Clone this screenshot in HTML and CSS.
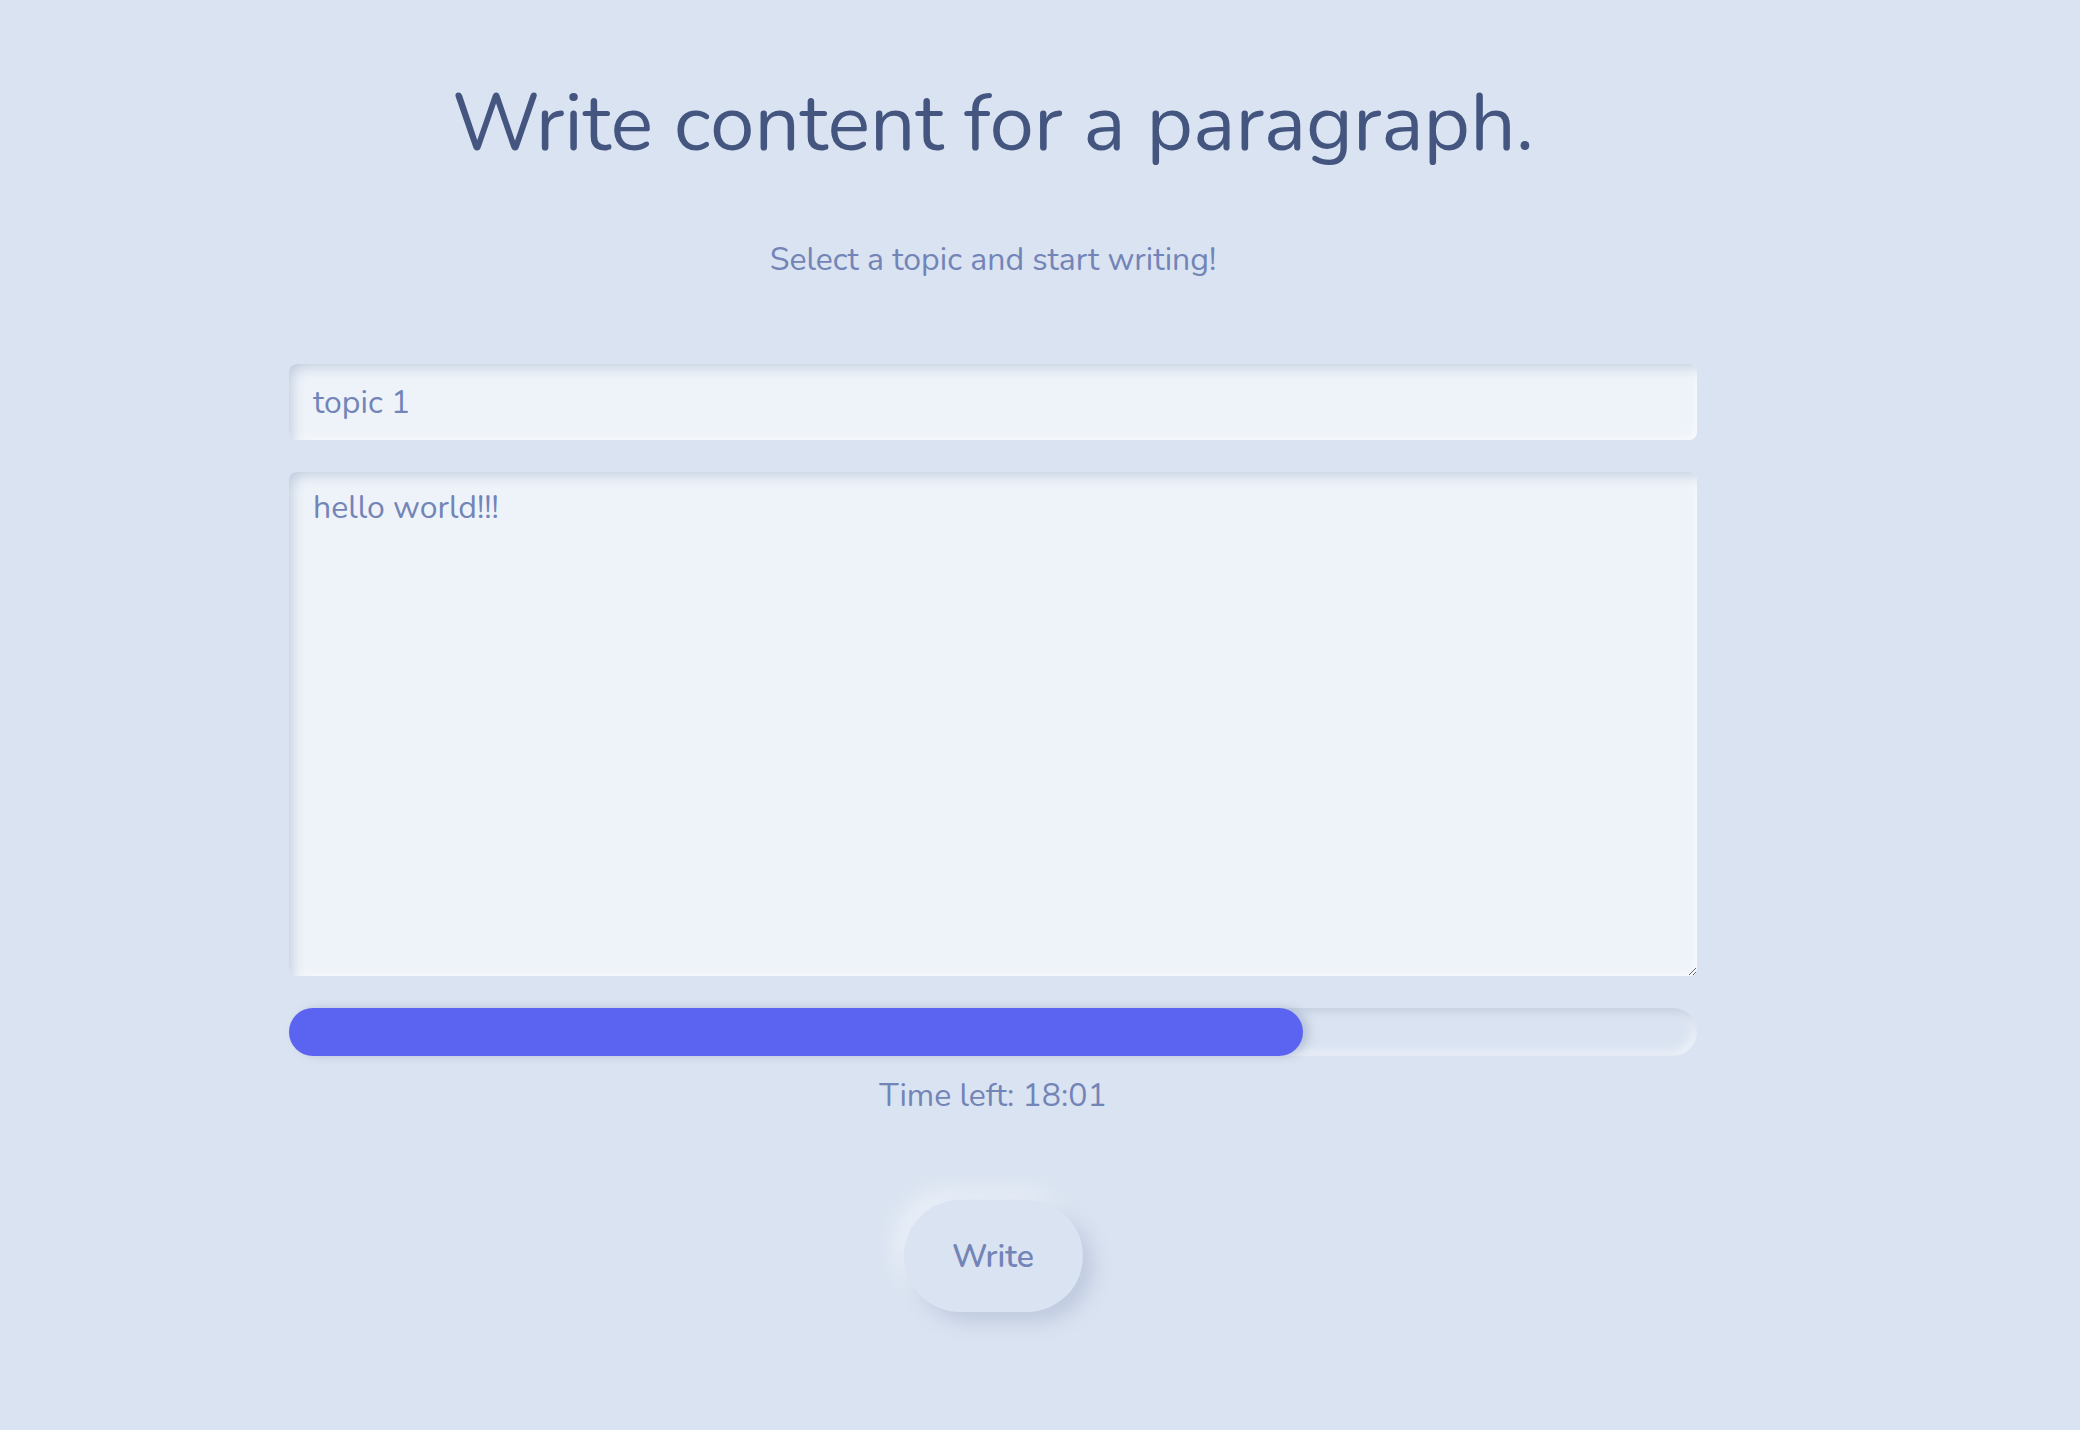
FILE: index.html
```html
<!DOCTYPE html>
<html lang="en">
<head>
<meta charset="utf-8">
<title>Write content for a paragraph.</title>
<link rel="stylesheet" href="styles.css">
</head>
<body>
<div class="page">
  <main class="container">
    <h1 class="title">Write content for a paragraph.</h1>
    <p class="subtitle">Select a topic and start writing!</p>
    <input class="topic" type="text" value="topic 1">
    <textarea class="content">hello world!!!</textarea>
    <div class="progress"><div class="progress-fill" style="width: 72%"></div></div>
    <p class="timer">Time left: 18:01</p>
    <button class="write-btn" type="button">Write</button>
  </main>
</div>
</body>
</html>
```
FILE: styles.css
```css
html, body {
  margin: 0;
  padding: 0;
  background: #dae3f1;
}
body {
  font-family: "Nunito", "Lato", "Noto Sans", sans-serif;
  color: #7384b7;
  min-height: 1430px;
}
.page {
  width: 1986px;
}
.container {
  width: 1408px;
  margin: 0 auto;
  display: flex;
  flex-direction: column;
  align-items: stretch;
}
.title {
  margin: 84px 0 0;
  font-size: 80px;
  line-height: 80px;
  font-weight: 400;
  color: #44567f;
  text-align: center;
}
.subtitle {
  margin: 76px 0 0;
  font-size: 32px;
  line-height: 40px;
  text-align: center;
}
.topic, .content {
  box-sizing: border-box;
  border: none;
  outline: none;
  border-radius: 8px;
  background: #eef3f9;
  font-family: inherit;
  font-size: 32px;
  color: #7384b7;
  padding: 0 24px;
  box-shadow: inset 8px 8px 14px -6px #bdc9dc, inset -6px -6px 10px -4px #f7f9fc;
}
.topic {
  margin-top: 84px;
  height: 76px;
}
.content {
  margin-top: 32px;
  height: 504px;
  padding-top: 16px;
  line-height: 40px;
  resize: vertical;
}
.progress {
  margin-top: 32px;
  height: 48px;
  border-radius: 24px;
  background: #dae3f1;
  box-shadow: inset 4px 4px 8px #c5cfe0, inset -4px -4px 8px #eef3f9;
  display: flex;
}
.progress-fill {
  height: 100%;
  border-radius: 24px;
  background: #5b64f0;
  box-shadow: 6px 0 10px rgba(120, 135, 170, 0.35);
}
.timer {
  margin: 20px 0 0;
  font-size: 32px;
  line-height: 40px;
  text-align: center;
}
.write-btn {
  align-self: center;
  margin-top: 84px;
  width: 179px;
  height: 112px;
  border: none;
  border-radius: 56px;
  background: #dae3f1;
  font-family: inherit;
  font-size: 32px;
  font-weight: 600;
  color: #7384b7;
  box-shadow: 10px 10px 20px #bfcadf, -10px -10px 20px #eaf0f8;
  cursor: pointer;
}
```
